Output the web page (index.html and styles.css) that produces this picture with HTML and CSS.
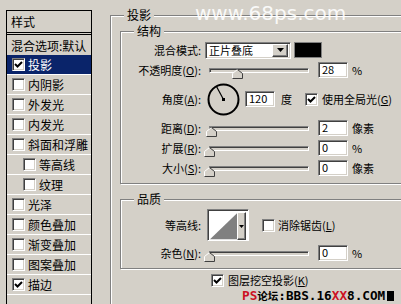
FILE: index.html
```html
<!DOCTYPE html>
<html lang="zh-CN">
    <head>
        <meta charset="UTF-8" />
        <title>图层样式 - 投影</title>
        <link rel="stylesheet" href="styles.css">
    </head>
    <body>
        <div class="dialog">
            <div class="styles-panel">
                <div class="panel-head">样式</div>
                <div class="style-row plain">混合选项:默认</div>
                <div class="style-row active"><span class="chk on"><svg width="9" height="9" viewBox="0 0 9 9"><path d="M1 4 L3.5 6.5 L8 2" stroke="#000" stroke-width="2" fill="none"/></svg></span>投影</div>
                <div class="style-row"><span class="chk"></span>内阴影</div>
                <div class="style-row"><span class="chk"></span>外发光</div>
                <div class="style-row"><span class="chk"></span>内发光</div>
                <div class="style-row"><span class="chk"></span>斜面和浮雕</div>
                <div class="style-row sub"><span class="chk"></span>等高线</div>
                <div class="style-row sub"><span class="chk"></span>纹理</div>
                <div class="style-row"><span class="chk"></span>光泽</div>
                <div class="style-row"><span class="chk"></span>颜色叠加</div>
                <div class="style-row"><span class="chk"></span>渐变叠加</div>
                <div class="style-row"><span class="chk"></span>图案叠加</div>
                <div class="style-row"><span class="chk on"><svg width="9" height="9" viewBox="0 0 9 9"><path d="M1 4 L3.5 6.5 L8 2" stroke="#000" stroke-width="2" fill="none"/></svg></span>描边</div>
            </div>

            <div class="effect-pane">
                <fieldset class="group outer">
                    <legend>投影</legend>

                    <fieldset class="group structure">
                        <legend>结构</legend>
                        <div class="field">
                            <span class="field-label">混合模式:</span>
                            <div class="select">
                                <span class="select-text">正片叠底</span>
                                <span class="drop-btn"><svg width="7" height="4" viewBox="0 0 7 4"><path d="M0 0 H7 L3.5 4 Z" fill="#000"/></svg></span>
                            </div>
                            <span class="swatch"></span>
                        </div>
                        <div class="field">
                            <span class="field-label">不透明度(<u>O</u>):</span>
                            <div class="slider"><span class="thumb" style="--v: 28"><svg width="11" height="10" viewBox="0 0 11 10"><polygon points="0.5,9.5 0.5,4.5 5.5,0.5 10.5,4.5 10.5,9.5" fill="#d4d0c8"/><path d="M0.5 9.5 V4.5 L5.5 0.5" stroke="#fff" fill="none"/><path d="M5.5 0.5 L10.5 4.5 V9.5 H0.5" stroke="#404040" fill="none"/></svg></span></div>
                            <span class="num">28</span>
                            <span class="unit">%</span>
                        </div>
                        <div class="field angle">
                            <span class="field-label">角度(<u>A</u>):</span>
                            <svg class="dial" width="33" height="33" viewBox="0 0 33 33">
                                <circle cx="16.5" cy="16.5" r="15" stroke="#000" stroke-width="2" fill="none"/>
                                <line x1="16.5" y1="16.5" x2="9.5" y2="3.5" stroke="#000" stroke-width="1.2"/>
                                <rect x="15" y="15" width="3" height="3" fill="#000"/>
                            </svg>
                            <span class="num wide">120</span>
                            <span class="unit deg">度</span>
                            <span class="chk global"><svg width="9" height="9" viewBox="0 0 9 9"><path d="M1 4 L3.5 6.5 L8 2" stroke="#000" stroke-width="2" fill="none"/></svg></span>
                            <span class="chk-text">使用全局光(<u>G</u>)</span>
                        </div>
                        <div class="field">
                            <span class="field-label">距离(<u>D</u>):</span>
                            <div class="slider"><span class="thumb" style="--v: 2"><svg width="11" height="10" viewBox="0 0 11 10"><polygon points="0.5,9.5 0.5,4.5 5.5,0.5 10.5,4.5 10.5,9.5" fill="#d4d0c8"/><path d="M0.5 9.5 V4.5 L5.5 0.5" stroke="#fff" fill="none"/><path d="M5.5 0.5 L10.5 4.5 V9.5 H0.5" stroke="#404040" fill="none"/></svg></span></div>
                            <span class="num">2</span>
                            <span class="unit">像素</span>
                        </div>
                        <div class="field">
                            <span class="field-label">扩展(<u>R</u>):</span>
                            <div class="slider"><span class="thumb" style="--v: 0"><svg width="11" height="10" viewBox="0 0 11 10"><polygon points="0.5,9.5 0.5,4.5 5.5,0.5 10.5,4.5 10.5,9.5" fill="#d4d0c8"/><path d="M0.5 9.5 V4.5 L5.5 0.5" stroke="#fff" fill="none"/><path d="M5.5 0.5 L10.5 4.5 V9.5 H0.5" stroke="#404040" fill="none"/></svg></span></div>
                            <span class="num">0</span>
                            <span class="unit">%</span>
                        </div>
                        <div class="field">
                            <span class="field-label">大小(<u>S</u>):</span>
                            <div class="slider"><span class="thumb" style="--v: 0"><svg width="11" height="10" viewBox="0 0 11 10"><polygon points="0.5,9.5 0.5,4.5 5.5,0.5 10.5,4.5 10.5,9.5" fill="#d4d0c8"/><path d="M0.5 9.5 V4.5 L5.5 0.5" stroke="#fff" fill="none"/><path d="M5.5 0.5 L10.5 4.5 V9.5 H0.5" stroke="#404040" fill="none"/></svg></span></div>
                            <span class="num">0</span>
                            <span class="unit">像素</span>
                        </div>
                    </fieldset>

                    <fieldset class="group quality">
                        <legend>品质</legend>
                        <div class="field contour-row">
                            <span class="field-label">等高线:</span>
                            <div class="contour">
                                <svg width="29" height="28" viewBox="0 0 29 28"><rect width="29" height="28" fill="#fff"/><polygon points="0,28 29,0 29,28" fill="#808080"/></svg>
                                <span class="contour-btn"><svg width="5" height="3" viewBox="0 0 5 3"><path d="M0 0 H5 L2.5 3 Z" fill="#000"/></svg></span>
                            </div>
                            <span class="chk smooth"></span>
                            <span class="chk-text">消除锯齿(<u>L</u>)</span>
                        </div>
                        <div class="field">
                            <span class="field-label">杂色(<u>N</u>):</span>
                            <div class="slider"><span class="thumb" style="--v: 0"><svg width="11" height="10" viewBox="0 0 11 10"><polygon points="0.5,9.5 0.5,4.5 5.5,0.5 10.5,4.5 10.5,9.5" fill="#d4d0c8"/><path d="M0.5 9.5 V4.5 L5.5 0.5" stroke="#fff" fill="none"/><path d="M5.5 0.5 L10.5 4.5 V9.5 H0.5" stroke="#404040" fill="none"/></svg></span></div>
                            <span class="num">0</span>
                            <span class="unit">%</span>
                        </div>
                    </fieldset>

                    <div class="knockout">
                        <span class="chk on"><svg width="9" height="9" viewBox="0 0 9 9"><path d="M1 4 L3.5 6.5 L8 2" stroke="#000" stroke-width="2" fill="none"/></svg></span>
                        <span>图层挖空投影(<u>K</u>)</span>
                    </div>
                    <div class="forum-mark"><span class="red">PS</span><span class="cjk">论坛</span>:BBS.16<span class="red">XX</span>8.COM<span class="block"></span></div>
                </fieldset>
            </div>

            <div class="site-mark">www.68ps.com</div>
        </div>
    </body>
</html>
```

FILE: styles.css
```css
* {
    margin: 0;
    padding: 0;
    box-sizing: border-box;
}

html,
body {
    width: 401px;
    height: 304px;
    overflow: hidden;
}

body {
    background-color: #d4d0c8;
    color: #000;
    font-family: "Noto Sans CJK SC", sans-serif;
    font-size: 11px;
}

.dialog {
    position: relative;
    display: flex;
    align-items: flex-start;
    height: 304px;
}

/* left list of styles */
.styles-panel {
    flex: none;
    width: 86px;
    height: 294px;
    margin: 10px 0 0 6px;
    border: 1px solid #000;
    border-bottom: 0;
    font-size: 12px;
}

.panel-head {
    height: 24px;
    line-height: 21px;
    padding-left: 4px;
    border-bottom: 3px double #000;
}

.style-row {
    display: flex;
    align-items: center;
    gap: 3px;
    height: 20px;
    padding-left: 5px;
    border-bottom: 1px solid #fff;
    white-space: nowrap;
}

.style-row.plain {
    padding-left: 4px;
    border-bottom: 0;
}

.style-row.sub {
    padding-left: 16px;
}

.style-row.active {
    background-color: #0a246a;
    color: #fff;
}

/* win classic check box */
.chk {
    flex: none;
    display: inline-flex;
    align-items: center;
    justify-content: center;
    width: 13px;
    height: 13px;
    background: #fff;
    border: 1px solid;
    border-color: #808080 #fff #fff #808080;
    box-shadow: inset 1px 1px #404040, inset -1px -1px #d4d0c8;
}

/* right side */
.effect-pane {
    flex: none;
    width: 300px;
    margin-left: 18px;
}

.group {
    min-width: 0;
    padding: 0 0 0 9px;
    border: 1px solid #808080;
    box-shadow: inset 1px 1px #fff, 1px 1px #fff;
}

.group legend {
    margin-left: 4px;
    padding: 0 3px;
    line-height: 14px;
    font-size: 12px;
    background-color: #d4d0c8;
}

.outer {
    width: 300px;
    height: 300px;
    margin-top: 8px;
}

.structure {
    width: 290px;
    height: 160px;
    margin-top: 2px;
    padding-top: 2px;
}

.quality {
    width: 290px;
    height: 77px;
    margin-top: 8px;
    padding-top: 1px;
}

.field {
    display: flex;
    align-items: center;
    height: 20px;
    white-space: nowrap;
}

.field.angle {
    height: 38px;
}

.field.contour-row {
    height: 36px;
}

.field-label {
    flex: none;
    width: 71px;
    margin-right: 4px;
    text-align: right;
}

.select {
    display: flex;
    align-items: center;
    width: 86px;
    height: 17px;
    padding: 2px;
    background: #fff;
    border: 1px solid;
    border-color: #808080 #fff #fff #808080;
    box-shadow: inset 1px 1px #404040, inset -1px -1px #d4d0c8;
}

.select-text {
    flex: 1;
    padding-left: 1px;
    line-height: 13px;
}

.drop-btn,
.contour-btn {
    display: flex;
    align-items: center;
    justify-content: center;
    background-color: #d4d0c8;
    border: 1px solid;
    border-color: #fff #404040 #404040 #fff;
    box-shadow: inset -1px -1px #808080;
}

.drop-btn {
    width: 16px;
    height: 13px;
}

.swatch {
    width: 28px;
    height: 16px;
    margin-left: 3px;
    background-color: #000;
    border: 1px solid #808080;
}

.slider {
    position: relative;
    width: 100px;
    height: 5px;
    margin-left: 4px;
    border: 1px solid;
    border-color: #808080 #fff #fff #808080;
    box-shadow: inset 1px 1px #404040;
}

.thumb {
    position: absolute;
    top: 0;
    left: calc(var(--v) * 1px - 6px);
    display: flex;
}

.num {
    width: 30px;
    height: 16px;
    margin-left: 9px;
    padding-left: 3px;
    line-height: 13px;
    background: #fff;
    border: 1px solid;
    border-color: #808080 #fff #fff #808080;
    box-shadow: inset 1px 1px #404040, inset -1px -1px #d4d0c8;
}

.unit {
    margin-left: 4px;
}

.dial {
    margin-left: 2px;
}

.num.wide {
    margin-left: 5px;
}

.unit.deg {
    margin-left: 6px;
}

.chk.global {
    margin-left: 13px;
}

.chk-text {
    margin-left: 4px;
}

.contour {
    display: flex;
    width: 42px;
    height: 32px;
    margin-left: 2px;
    padding: 2px;
    background: #fff;
    border: 1px solid;
    border-color: #808080 #fff #fff #808080;
    box-shadow: inset 1px 1px #404040;
}

.contour-btn {
    width: 9px;
    height: 28px;
}

.chk.smooth {
    margin-left: 13px;
}

.chk.smooth + .chk-text {
    margin-left: 3px;
}

.knockout {
    display: flex;
    align-items: center;
    gap: 4px;
    height: 13px;
    margin: 5px 0 0 91px;
    line-height: 13px;
}

/* forum watermark at the bottom */
.forum-mark {
    height: 15px;
    margin: 1px 0 0 122px;
    white-space: nowrap;
    font-family: "DejaVu Sans Mono", monospace;
    font-size: 12.7px;
    font-weight: bold;
    line-height: 15px;
}

.forum-mark .cjk {
    font-family: "Noto Sans CJK SC", sans-serif;
    font-size: 10.5px;
}

.forum-mark .red {
    color: #cc1122;
}

.forum-mark .block {
    display: inline-block;
    width: 7px;
    height: 10px;
    margin-left: 2px;
    vertical-align: -1px;
    background-color: #000;
}

/* watermark over the top */
.site-mark {
    position: absolute;
    top: 3px;
    left: 195px;
    font-family: "DejaVu Sans", sans-serif;
    font-size: 20px;
    line-height: 20px;
    color: rgba(255, 255, 255, 0.9);
}
```
